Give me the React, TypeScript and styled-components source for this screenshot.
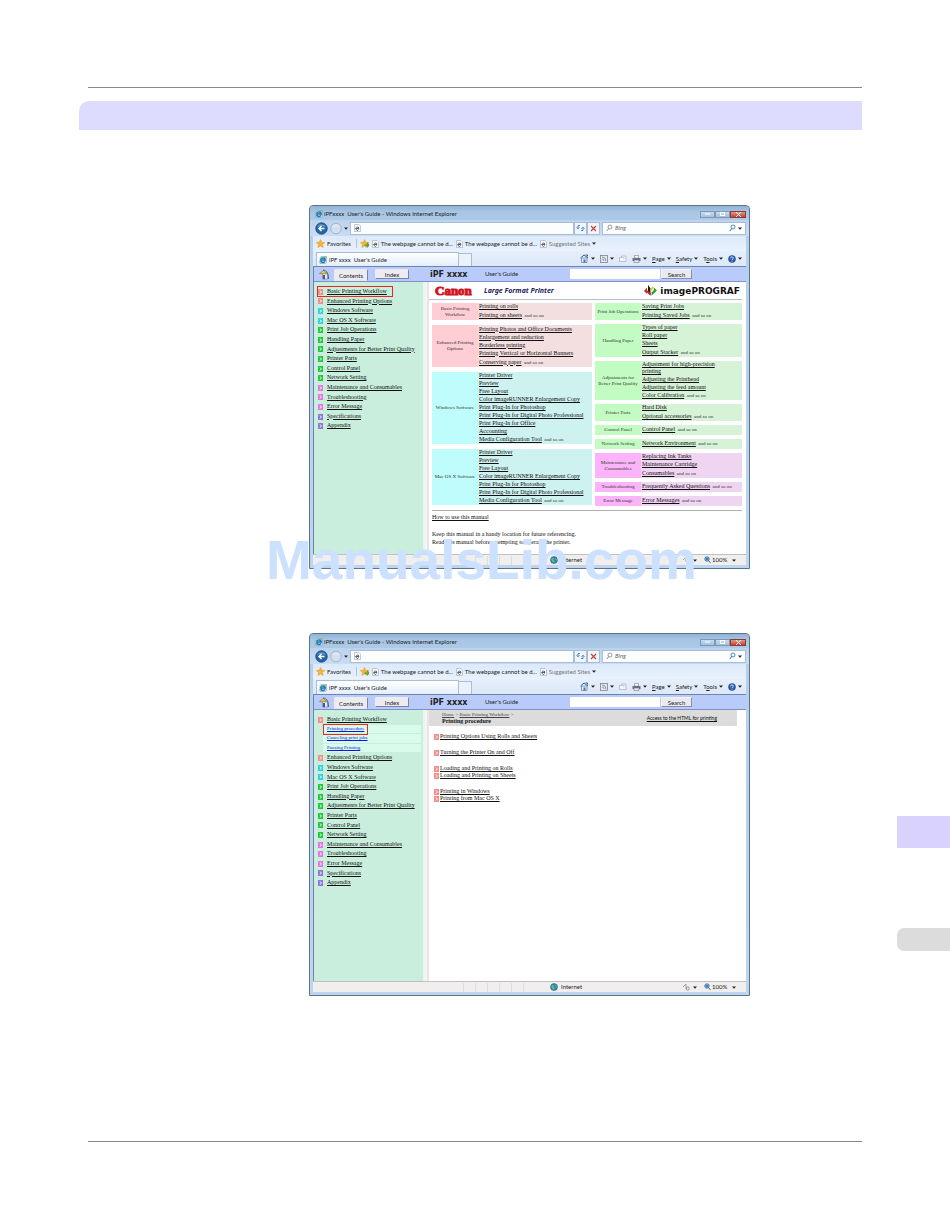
import React from 'react';
import styled, { createGlobalStyle, css } from 'styled-components';

const serif = '"Liberation Serif", serif';
const ui = 'Lato, "Open Sans", sans-serif';
const wide = '"DejaVu Sans", sans-serif';

const pink = '#f98a8a';
const cyan = '#2fcfe0';
const green = '#22c63a';
const magenta = '#e873e0';
const violet = '#8f74d8';

const GlobalStyle = createGlobalStyle`
  * { box-sizing: border-box; }
  body { margin: 0; background: #fff; }
  button, input { font: inherit; color: inherit; margin: 0; padding: 0; border: 0; background: none; }
  ul { margin: 0; padding: 0; list-style: none; }
  p { margin: 0; }
  a { color: inherit; }
  svg { display: block; flex: none; }
`;

/* ---------- manual page ---------- */

const Page = styled.div`
  display: flex;
  min-height: 100vh;
`;

const Sheet = styled.main`
  flex: 1;
  min-width: 0;
  display: flex;
  flex-direction: column;
  padding: 87px 35px 87px 88px;
`;

const Rule = styled.hr`
  width: 100%;
  height: 1px;
  margin: 0;
  border: 0;
  background: #84888c;
`;

const Banner = styled.div`
  height: 29px;
  margin: 13px 0 75px -9px;
  border-radius: 10px 0 0 0;
  background: #dddcff;
`;

const Figures = styled.div`
  display: flex;
  flex-direction: column;
  gap: 64px;
  padding: 0 112px 0 221px;
  margin-bottom: 145px;
`;

const Figure = styled.figure`
  position: relative;
  margin: 0;
`;

const Watermark = styled.div`
  position: absolute;
  left: -43px;
  bottom: -23px;
  font: bold 55px/64px "Liberation Sans", Arial, sans-serif;
  color: #cce0ff;
  white-space: nowrap;
  pointer-events: none;
`;

const Rail = styled.aside`
  width: 53px;
  padding-top: 816px;
  display: flex;
  flex-direction: column;
  gap: 80px;
`;

const RailTab = styled.div<{ $muted?: boolean }>`
  height: ${p => (p.$muted ? 23 : 32)}px;
  border-radius: ${p => (p.$muted ? '7px 0 0 7px' : '0')};
  background: ${p => (p.$muted ? '#dcdcdc' : '#d9d2ff')};
`;

/* ---------- browser window ---------- */

const Window = styled.div`
  display: flex;
  flex-direction: column;
  padding: 0 3px 3px;
  border: 1px solid #5d7488;
  border-radius: 4px 4px 0 0;
  background: linear-gradient(#a4c3e4, #b4cfea 16px, #bdd5ee);
  font: 6px/8px ${ui};
  color: #222;
  white-space: nowrap;
`;

const TitleBar = styled.div`
  display: flex;
  align-items: center;
  gap: 1px;
  height: 14px;
  margin: 0 -3px;
  padding: 2px 0 0 5px;
  border-radius: 3px 3px 0 0;
  background: linear-gradient(#8fb2d6, #a8c5e4 40%, #adc9e9);
`;

const WindowButtons = styled.div`
  display: flex;
  margin-left: auto;
  padding-right: 3px;
`;

const WindowButton = styled.button<{ $close?: boolean }>`
  display: grid;
  place-items: center;
  width: ${p => (p.$close ? 16 : 15)}px;
  height: 7px;
  border: 1px solid ${p => (p.$close ? '#8d3a30' : '#7d98b5')};
  background: ${p => (p.$close ? 'linear-gradient(#e09a8c, #c8402c)' : 'linear-gradient(#c8dcf0, #a5c0dc)')};
`;

const AddressRow = styled.div`
  display: flex;
  align-items: center;
  gap: 2px;
  height: 16px;
  margin: 0 -3px;
  padding: 0 3px 0 5px;
  background: linear-gradient(#bcd3ee, #c9dcf3);
`;

const Field = styled.div<{ $grow?: boolean }>`
  display: flex;
  align-items: center;
  gap: 2px;
  height: 13px;
  padding: 0 3px;
  border: 1px solid #a9bdd6;
  background: #fbfdff;
  ${p => (p.$grow ? css`flex: 1; min-width: 0;` : css`width: 144px;`)}
  input { flex: 1; min-width: 0; width: 0; font-style: italic; outline: 0; }
  input::placeholder { color: #666; opacity: 1; }
`;

const SquareButton = styled.button`
  display: grid;
  place-items: center;
  width: 13px;
  height: 13px;
  margin-left: -2px;
  border: 1px solid #a9bdd6;
  background: #f0f6fd;
`;

const IconButton = styled.button`
  display: grid;
  place-items: center;
`;

const ChromeRow = styled.div<{ $end?: boolean }>`
  display: flex;
  align-items: ${p => (p.$end ? 'flex-end' : 'center')};
  height: 15px;
  padding: 0 4px 0 3px;
  background: ${p => (p.$end ? 'linear-gradient(#e6effb, #dce8f8)' : 'linear-gradient(#dce9f9, #e9f2fd)')};
`;

const Bookmark = styled.a<{ $muted?: boolean }>`
  display: flex;
  align-items: center;
  gap: 2px;
  margin-right: 3px;
  text-decoration: none;
  color: ${p => (p.$muted ? '#777' : '#222')};
`;

const Divider = styled.span`
  width: 1px;
  height: 9px;
  margin: 0 3px 0 2px;
  background: #b3c3d8;
`;

const PageTab = styled.button`
  display: flex;
  align-items: center;
  gap: 2px;
  width: 143px;
  height: 14px;
  padding: 0 2px;
  border: 1px solid #a9bdd6;
  border-bottom: 0;
  background: linear-gradient(#fff, #e3eefb);
`;

const NewTab = styled.button`
  width: 13px;
  height: 13px;
  border: 1px solid #a9bdd6;
  border-left: 0;
  border-bottom: 0;
  background: #eaf2fc;
`;

const Commands = styled.div`
  display: flex;
  align-items: center;
  gap: 5px;
  height: 15px;
  margin-left: auto;
`;

const Command = styled.button`
  display: flex;
  align-items: center;
  gap: 2px;
  u { text-underline-offset: 1px; }
`;

const Viewport = styled.div`
  border-top: 1px solid #6e84a8;
  border-left: 1px solid #6e84a8;
  background: #fff;
`;

const StatusBar = styled.div`
  display: flex;
  align-items: center;
  height: 11px;
  border-top: 1px solid #c4c0c0;
  background: #f1eeee;
`;

const StatusPanes = styled.div`
  display: flex;
  flex: 1;
  justify-content: flex-end;
  gap: 11px;
  padding-right: 26px;
  span { width: 1px; height: 9px; background: #dfdcdc; }
`;

const StatusItem = styled.div<{ $width: number; $tight?: boolean }>`
  display: flex;
  align-items: center;
  gap: ${p => (p.$tight ? 1 : 3)}px;
  width: ${p => p.$width}px;
`;

/* ---------- guide inside the browser ---------- */

const GuideBar = styled.div`
  display: flex;
  align-items: center;
  height: 15px;
  padding-left: 5px;
  border-bottom: 1px solid #7d90cc;
  background: #b9cbfb;
`;

const GuideTab = styled.button<{ $active?: boolean }>`
  width: 34px;
  height: ${p => (p.$active ? 12 : 10)}px;
  align-self: ${p => (p.$active ? 'flex-end' : 'center')};
  margin-left: ${p => (p.$active ? 4 : 7)}px;
  border: 1px solid #ececf4;
  border-right-color: #7784a8;
  border-bottom-color: ${p => (p.$active ? '#e8e8ee' : '#7784a8')};
  border-radius: 2px 2px 0 0;
  background: #ececf0;
  line-height: 7px;
`;

const Model = styled.strong`
  width: 55px;
  margin-left: 21px;
  font: bold 8px/9px ${wide};
`;

const GuideName = styled.span`
  flex: 1;
`;

const GuideSearch = styled.form`
  display: flex;
  align-items: center;
  gap: 1px;
  margin-right: 54px;
  input { width: 90px; height: 10px; background: #fff; }
  button {
    width: 31px;
    height: 10px;
    border: 1px solid #f4f4f4;
    border-right-color: #8a8fa0;
    border-bottom-color: #8a8fa0;
    background: #e9e9ee;
    line-height: 7px;
  }
`;

const GuideBody = styled.div<{ $height: number }>`
  display: flex;
  min-height: ${p => p.$height}px;
  font-family: ${serif};
  color: #111;
`;

const Sidebar = styled.nav`
  width: 109px;
  padding: 5px 2px 0 4px;
  background: #c9eedd;
  line-height: 1.6;
`;

const Splitter = styled.div`
  width: 6px;
  border-left: 2px solid #e9f5ef;
  border-right: 2px solid #e9e5e7;
  background: #f7f4f5;
`;

const Topic = styled.li`
  position: relative;
  display: flex;
  align-items: center;
  gap: 4px;
`;

const SubTopic = styled.li`
  position: relative;
  height: 1.6em;
  margin-left: 5px;
  padding-left: 4px;
  border-bottom: 1px solid #c9eedd;
  background: #d9fbec;
  color: #1414e0;
  a { display: block; font-size: 5px; line-height: 8px; }
`;

const Highlight = styled.span<{ $sub?: boolean }>`
  position: absolute;
  z-index: 1;
  top: -1px;
  left: ${p => (p.$sub ? 0 : -1)}px;
  width: ${p => (p.$sub ? 45 : 76)}px;
  height: 11px;
  border: 1px solid #e8281c;
`;

const Article = styled.article`
  flex: 1;
  min-width: 0;
`;

const Masthead = styled.header`
  display: flex;
  align-items: center;
  height: 18px;
  margin-right: 4px;
  padding: 0 2px 0 6px;
  border-bottom: 1px solid #b9bccb;
`;

const Canon = styled.strong`
  width: 49px;
  font: bold 13px/14px ${serif};
  color: #cf1120;
  -webkit-text-stroke: 1px #cf1120;
  paint-order: stroke;
`;

const Tagline = styled.em`
  flex: 1;
  font: italic bold 7px/8px "Noto Sans", sans-serif;
  color: #23235c;
`;

const Brand = styled.strong`
  display: flex;
  align-items: center;
  gap: 3px;
  font: bold 9px/10px ${wide};
`;

const Topics = styled.div`
  display: grid;
  grid-template-columns: 160fr 147fr;
  column-gap: 3px;
  margin: 3px 4px 0 3px;
  padding-bottom: 4px;
  border-bottom: 1px solid #b0b0b0;
`;

const Column = styled.div<{ $gap: number }>`
  display: flex;
  flex-direction: column;
  gap: ${p => p.$gap}px;
`;

const tones = {
  pink: ['#ffcdd4', '#f3dfe0'],
  cyan: ['#bffdfd', '#cdf2f0'],
  green: ['#c3fcc3', '#d6f3d8'],
  violet: ['#fbb4fa', '#efd5f1'],
};
type Tone = keyof typeof tones;

const Group = styled.section<{ $tone: Tone; $min: number }>`
  display: flex;
  min-height: ${p => p.$min}px;
  background: ${p => tones[p.$tone][1]};
  h3 {
    display: grid;
    place-items: center;
    width: 46px;
    margin: 0;
    background: ${p => tones[p.$tone][0]};
    font: 5px/6px ${serif};
    text-align: center;
    white-space: pre-line;
    color: #333;
  }
`;

const Links = styled.ul<{ $loose: boolean }>`
  align-self: center;
  flex: 1;
  min-width: 0;
  padding-left: 1px;
  line-height: 7px;
  li { padding-bottom: 1px; white-space: pre-line; }
  li:last-child { margin-top: ${p => (p.$loose ? 1 : 0)}px; }
  small { font-size: 5px; color: #333; }
`;

const Notes = styled.div`
  padding: 2px 3px 0;
  p { margin-top: 9px; }
`;

const Crumbs = styled.header`
  display: flex;
  align-items: center;
  justify-content: space-between;
  height: 16px;
  margin-right: 9px;
  padding: 0 20px 0 13px;
  background: #dcdcdc;
  line-height: 7px;
  small { display: block; font-size: 5px; color: #444; }
  > a { font: 5px/7px ${ui}; }
`;

const Contents = styled.div`
  display: flex;
  flex-direction: column;
  gap: 9px;
  padding: 7px 5px;
  line-height: 7px;
  li { display: flex; align-items: center; gap: 1px; }
`;

/* ---------- small drawings ---------- */

const Bullet = ({ color }: { color: string }) => (
  <svg width="5" height="6" viewBox="0 0 10 12" aria-hidden="true">
    <rect width="10" height="12" fill={color} />
    <path d="M3.500 3 7 6 3.500 9" fill="none" stroke="#fff" strokeWidth="1.800" />
  </svg>
);

const Arrow = () => (
  <svg width="4" height="3" viewBox="0 0 8 6" aria-hidden="true">
    <path d="M0 1h8L4 5.500z" fill="#222" />
  </svg>
);

const ExplorerIcon = () => (
  <svg width="8" height="8" viewBox="0 0 16 16" aria-hidden="true">
    <path d="M4 1h11v12l-3 2H2V4z" fill="#cfe4f7" stroke="#7b93ae" />
    <path d="M12 10.500a4.500 4.500 0 1 1 .5-2.500H4.500" fill="none" stroke="#1674c4" strokeWidth="3" />
    <path d="M2 13C1 9 8 2 15 2" fill="none" stroke="#56b44c" strokeWidth="1.800" />
  </svg>
);

const PageIcon = () => (
  <svg width="7" height="8" viewBox="0 0 14 16" aria-hidden="true">
    <path d="M1 1h9l3 3v11H1z" fill="#fff" stroke="#8b95a2" />
    <path d="M9.500 11a3.200 3.200 0 1 1 .5-2H4" fill="none" stroke="#3f4d60" strokeWidth="1.700" />
  </svg>
);

const Star = ({ plus }: { plus?: boolean }) => (
  <svg width="9" height="9" viewBox="0 0 18 18" aria-hidden="true">
    <path d="m9 1 2.500 5.500 6 .6-4.500 4 1.300 6L9 14l-5.300 3.100L5 11.100.5 7.100l6-.6z" fill="#fbb42c" stroke="#d98a18" strokeWidth=".8" />
    {plus && <path d="M9 12h8m-3-4 4 4-4 4" fill="none" stroke="#3ea63a" strokeWidth="2.500" />}
  </svg>
);

const RoundArrow = ({ active }: { active?: boolean }) => (
  <svg width={active ? 13 : 12} height="13" viewBox="0 0 26 26" aria-hidden="true">
    <circle cx="13" cy="13" r="11.500" fill={active ? '#2466ae' : '#d3dfed'} stroke={active ? '#17406f' : '#8ea5bf'} strokeWidth="1.500" />
    <path d="M4 9a10 8 0 0 1 18 0z" fill="#fff" opacity=".3" />
    {active && <path d="M19 13H8m5-5-5 5 5 5" fill="none" stroke="#fff" strokeWidth="3" />}
  </svg>
);

const Lens = ({ color = '#7b8797' }: { color?: string }) => (
  <svg width="7" height="8" viewBox="0 0 14 16" aria-hidden="true">
    <circle cx="8" cy="6" r="4" fill="none" stroke={color} strokeWidth="1.600" />
    <path d="m5.500 9-4 5" stroke={color} strokeWidth="2" />
  </svg>
);

const RefreshIcon = () => (
  <svg width="9" height="8" viewBox="0 0 18 16" aria-hidden="true">
    <path d="M8 3H4v6M1 6.500l3 3 3-3M10 13h4V7m-3 2.500 3-3 3 3" fill="none" stroke="#2d6cab" strokeWidth="1.600" />
  </svg>
);

const StopIcon = () => (
  <svg width="7" height="7" viewBox="0 0 14 14" aria-hidden="true">
    <path d="m2 2 10 10M12 2 2 12" stroke="#d23a2a" strokeWidth="2.200" />
  </svg>
);

const HomeIcon = () => (
  <svg width="9" height="9" viewBox="0 0 18 18" aria-hidden="true">
    <path d="M3 8h11v9H3z" fill="#dfe8f4" stroke="#39506f" />
    <path d="M1 8 8 2l8 6M11 2h4v3" fill="none" stroke="#2c5f9c" strokeWidth="2" />
    <path d="M7 11h4v6H7z" fill="#4f79ae" />
  </svg>
);

const FeedIcon = () => (
  <svg width="8" height="8" viewBox="0 0 16 16" aria-hidden="true">
    <rect x="1" y="1" width="14" height="14" fill="#e5e8ec" stroke="#777f8a" strokeWidth="1.500" />
    <path d="M4 4a8 8 0 0 1 8 8M4 8a4 4 0 0 1 4 4" fill="none" stroke="#777f8a" strokeWidth="1.500" />
  </svg>
);

const MailIcon = () => (
  <svg width="8" height="8" viewBox="0 0 16 16" aria-hidden="true">
    <path d="M1 5h4V2h9v11H1z" fill="#f2f4f7" stroke="#8d96a4" />
    <path d="M5 5h5v3" fill="none" stroke="#a3abb7" />
  </svg>
);

const PrintIcon = () => (
  <svg width="9" height="8" viewBox="0 0 18 16" aria-hidden="true">
    <path d="M5 1h8v5H5z" fill="#fff" stroke="#667" />
    <path d="M1 6h16v6H1z" fill="#6a737f" />
    <path d="M4 10h10v5H4z" fill="#e6e9ee" stroke="#667" />
  </svg>
);

const HelpIcon = () => (
  <svg width="8" height="8" viewBox="0 0 16 16" aria-hidden="true">
    <circle cx="8" cy="8" r="7" fill="#2a5db4" stroke="#183a7a" />
    <path d="M5.500 6.500a2.500 2.500 0 1 1 3.500 2L8 10m0 1.500v1.500" fill="none" stroke="#fff" strokeWidth="1.700" />
  </svg>
);

const GuideHome = () => (
  <svg width="11" height="11" viewBox="0 0 22 22" aria-hidden="true">
    <path d="M7 8h10v12H7z" fill="#e9edf5" stroke="#53607a" />
    <path d="M1 9 9 3l6 7z" fill="#f2cf2c" stroke="#61603a" />
    <path d="M8 2c7 0 11 6 11 18" fill="none" stroke="#53607a" strokeWidth="2" />
    <path d="M8 12h4v8H8z" fill="#3f5a92" />
  </svg>
);

const BrandMark = () => (
  <svg width="13" height="11" viewBox="0 0 26 22" aria-hidden="true">
    <path d="M6 5v13L0 12z" fill="#d8232c" />
    <path d="M8 0l5 7v14L6 14l2-4z" fill="#151515" />
    <path d="M8 11l5 5v5l-6-5z" fill="#d8232c" />
    <path d="M18 1v7l-5 6V8z" fill="#f0cf1c" />
    <path d="M19 4l7 7-11 10v-6l5-5z" fill="#2f9a3e" />
  </svg>
);

const Globe = () => (
  <svg width="8" height="8" viewBox="0 0 16 16" aria-hidden="true">
    <circle cx="8" cy="8" r="7" fill="#2f86b5" stroke="#1c5674" />
    <path d="M3 5c3-3 5 0 4 2s3 2 2 5-5-1-6-4zM10 3l4 4-2 2z" fill="#6cc07c" />
  </svg>
);

const LockIcon = () => (
  <svg width="8" height="8" viewBox="0 0 16 16" aria-hidden="true">
    <path d="M2 8 8 2v10M9 8h5v6H9z" fill="none" stroke="#8a8a8a" strokeWidth="1.500" />
  </svg>
);

const ZoomIcon = () => (
  <svg width="7" height="8" viewBox="0 0 14 16" aria-hidden="true">
    <circle cx="6" cy="6" r="4.500" fill="#8fbbe6" stroke="#2d67a5" strokeWidth="1.500" />
    <path d="m9 9 4 5M4 6h4M6 4v4" stroke="#234d7d" strokeWidth="1.600" />
  </svg>
);

/* ---------- content ---------- */

const topics: [string, string][] = [
  ['Basic Printing Workflow', pink],
  ['Enhanced Printing Options', pink],
  ['Windows Software', cyan],
  ['Mac OS X Software', cyan],
  ['Print Job Operations', green],
  ['Handling Paper', green],
  ['Adjustments for Better Print Quality', green],
  ['Printer Parts', green],
  ['Control Panel', green],
  ['Network Setting', green],
  ['Maintenance and Consumables', magenta],
  ['Troubleshooting', magenta],
  ['Error Message', magenta],
  ['Specifications', violet],
  ['Appendix', violet],
];

const subTopics = ['Printing procedure', 'Canceling print jobs', 'Pausing Printing'];

interface GroupData {
  title: string;
  tone: Tone;
  min: number;
  links: string[];
  dense?: boolean;
}

const leftGroups: GroupData[] = [
  { title: 'Basic Printing\nWorkflow', tone: 'pink', min: 17, links: ['Printing on rolls', 'Printing on sheets'] },
  {
    title: 'Enhanced Printing\nOptions', tone: 'pink', min: 42,
    links: ['Printing Photos and Office Documents', 'Enlargement and reduction', 'Borderless printing', 'Printing Vertical or Horizontal Banners', 'Conserving paper'],
  },
  {
    title: 'Windows Software', tone: 'cyan', min: 72, dense: true,
    links: ['Printer Driver', 'Preview', 'Free Layout', 'Color imageRUNNER Enlargement Copy', 'Print Plug-In for Photoshop', 'Print Plug-In for Digital Photo Professional', 'Print Plug-In for Office', 'Accounting', 'Media Configuration Tool'],
  },
  {
    title: 'Mac OS X Software', tone: 'cyan', min: 56, dense: true,
    links: ['Printer Driver', 'Preview', 'Free Layout', 'Color imageRUNNER Enlargement Copy', 'Print Plug-In for Photoshop', 'Print Plug-In for Digital Photo Professional', 'Media Configuration Tool'],
  },
];

const rightGroups: GroupData[] = [
  { title: 'Print Job Operations', tone: 'green', min: 17, links: ['Saving Print Jobs', 'Printing Saved Jobs'] },
  { title: 'Handling Paper', tone: 'green', min: 33, links: ['Types of paper', 'Roll paper', 'Sheets', 'Output Stacker'] },
  {
    title: 'Adjustments for\nBetter Print Quality', tone: 'green', min: 39, dense: true,
    links: ['Adjustment for high-precision\nprinting', 'Adjusting the Printhead', 'Adjusting the feed amount', 'Color Calibration'],
  },
  { title: 'Printer Parts', tone: 'green', min: 17, links: ['Hard Disk', 'Optional accessories'] },
  { title: 'Control Panel', tone: 'green', min: 10, dense: true, links: ['Control Panel'] },
  { title: 'Network Setting', tone: 'green', min: 10, dense: true, links: ['Network Environment'] },
  { title: 'Maintenance and\nConsumables', tone: 'violet', min: 25, links: ['Replacing Ink Tanks', 'Maintenance Cartridge', 'Consumables'] },
  { title: 'Troubleshooting', tone: 'violet', min: 10, dense: true, links: ['Frequently Asked Questions'] },
  { title: 'Error Message', tone: 'violet', min: 10, dense: true, links: ['Error Messages'] },
];

const procedures = [
  ['Printing Options Using Rolls and Sheets'],
  ['Turning the Printer On and Off'],
  ['Loading and Printing on Rolls', 'Loading and Printing on Sheets'],
  ['Printing in Windows', 'Printing from Mac OS X'],
];

const GroupColumn = ({ groups, gap }: { groups: GroupData[]; gap: number }) => (
  <Column $gap={gap}>
    {groups.map(g => (
      <Group key={g.title} $tone={g.tone} $min={g.min}>
        <h3>{g.title}</h3>
        <Links $loose={!g.dense}>
          {g.links.map((text, i) => (
            <li key={text}>
              <a href="#topic">{text}</a>
              {i === g.links.length - 1 && <small>&nbsp; and so on</small>}
            </li>
          ))}
        </Links>
      </Group>
    ))}
  </Column>
);

const Browser = ({ expanded, height, children }: { expanded?: boolean; height: number; children: React.ReactNode }) => (
  <Window>
    <TitleBar>
      <ExplorerIcon />
      <span>iPFxxxx&nbsp; User's Guide - Windows Internet Explorer</span>
      <WindowButtons>
        <WindowButton aria-label="Minimize"><svg width="5" height="2"><path d="M0 1h5" stroke="#fff" /></svg></WindowButton>
        <WindowButton aria-label="Maximize"><svg width="5" height="4"><rect x=".5" y=".5" width="4" height="3" fill="none" stroke="#fff" /></svg></WindowButton>
        <WindowButton aria-label="Close" $close><svg width="5" height="5"><path d="m0 0 5 5M5 0 0 5" stroke="#fff" /></svg></WindowButton>
      </WindowButtons>
    </TitleBar>
    <AddressRow>
      <IconButton aria-label="Back"><RoundArrow active /></IconButton>
      <IconButton aria-label="Forward"><RoundArrow /></IconButton>
      <IconButton aria-label="Recent pages"><Arrow /></IconButton>
      <Field $grow>
        <PageIcon />
        <input aria-label="Address" />
      </Field>
      <SquareButton aria-label="Refresh"><RefreshIcon /></SquareButton>
      <SquareButton aria-label="Stop"><StopIcon /></SquareButton>
      <Field>
        <Lens />
        <input aria-label="Search the web" placeholder="Bing" />
        <Lens color="#2d6cab" />
        <Arrow />
      </Field>
    </AddressRow>
    <ChromeRow>
      <Bookmark href="#favorites"><Star />Favorites</Bookmark>
      <Divider />
      <Bookmark href="#add"><Star plus /></Bookmark>
      <Bookmark href="#page"><PageIcon />The webpage cannot be d...</Bookmark>
      <Bookmark href="#page"><PageIcon />The webpage cannot be d...</Bookmark>
      <Bookmark href="#sites" $muted><PageIcon />Suggested Sites<Arrow /></Bookmark>
    </ChromeRow>
    <ChromeRow $end>
      <PageTab><ExplorerIcon /><span>iPF xxxx&nbsp; User's Guide</span></PageTab>
      <NewTab aria-label="New tab" />
      <Commands>
        <Command aria-label="Home"><HomeIcon /><Arrow /></Command>
        <Command aria-label="Feeds"><FeedIcon /><Arrow /></Command>
        <Command aria-label="Mail"><MailIcon /></Command>
        <Command aria-label="Print"><PrintIcon /><Arrow /></Command>
        <Command><span><u>P</u>age</span><Arrow /></Command>
        <Command><span><u>S</u>afety</span><Arrow /></Command>
        <Command><span>T<u>o</u>ols</span><Arrow /></Command>
        <Command aria-label="Help"><HelpIcon /><Arrow /></Command>
      </Commands>
    </ChromeRow>
    <Viewport>
      <GuideBar>
        <IconButton aria-label="Guide home"><GuideHome /></IconButton>
        <GuideTab $active>Contents</GuideTab>
        <GuideTab>Index</GuideTab>
        <Model>iPF xxxx</Model>
        <GuideName>User's Guide</GuideName>
        <GuideSearch onSubmit={e => e.preventDefault()}>
          <input aria-label="Search the guide" />
          <button type="submit">Search</button>
        </GuideSearch>
      </GuideBar>
      <GuideBody $height={height}>
        <Sidebar>
          <ul>
            {topics.map(([name, color], i) => (
              <React.Fragment key={name}>
                <Topic>
                  <Bullet color={color} />
                  <a href="#topic">{name}</a>
                  {i === 0 && !expanded && <Highlight />}
                </Topic>
                {i === 0 && expanded && subTopics.map((sub, j) => (
                  <SubTopic key={sub}>
                    <a href="#procedure">{sub}</a>
                    {j === 0 && <Highlight $sub />}
                  </SubTopic>
                ))}
              </React.Fragment>
            ))}
          </ul>
        </Sidebar>
        <Splitter />
        <Article>{children}</Article>
      </GuideBody>
    </Viewport>
    <StatusBar>
      <StatusPanes><span /><span /><span /><span /><span /><span /></StatusPanes>
      <StatusItem $width={132}><Globe />Internet</StatusItem>
      <StatusItem $width={22}><LockIcon /><Arrow /></StatusItem>
      <StatusItem $width={28} $tight><ZoomIcon />100%</StatusItem>
      <StatusItem $width={14}><Arrow /></StatusItem>
    </StatusBar>
  </Window>
);

export default function App() {
  return (
    <>
      <GlobalStyle />
      <Page>
        <Sheet>
          <Rule />
          <Banner />
          <Figures>
            <Figure>
              <Browser height={272}>
                <Masthead>
                  <Canon>Canon</Canon>
                  <Tagline>Large Format Printer</Tagline>
                  <Brand><BrandMark />imagePROGRAF</Brand>
                </Masthead>
                <Topics>
                  <GroupColumn groups={leftGroups} gap={5} />
                  <GroupColumn groups={rightGroups} gap={4} />
                </Topics>
                <Notes>
                  <a href="#howto">How to use this manual</a>
                  <p>Keep this manual in a handy location for future referencing.<br />Read this manual before attempting to operate the printer.</p>
                </Notes>
              </Browser>
              <Watermark>ManualsLib.com</Watermark>
            </Figure>
            <Figure>
              <Browser expanded height={271}>
                <Crumbs>
                  <div>
                    <small><a href="#home">Home</a> &gt; <a href="#basic">Basic Printing Workflow</a> &gt;</small>
                    <strong>Printing procedure</strong>
                  </div>
                  <a href="#html">Access to the HTML for printing</a>
                </Crumbs>
                <Contents>
                  {procedures.map(list => (
                    <ul key={list[0]}>
                      {list.map(name => (
                        <li key={name}><Bullet color={pink} /><a href="#procedure">{name}</a></li>
                      ))}
                    </ul>
                  ))}
                </Contents>
              </Browser>
            </Figure>
          </Figures>
          <Rule />
        </Sheet>
        <Rail>
          <RailTab />
          <RailTab $muted />
        </Rail>
      </Page>
    </>
  );
}
